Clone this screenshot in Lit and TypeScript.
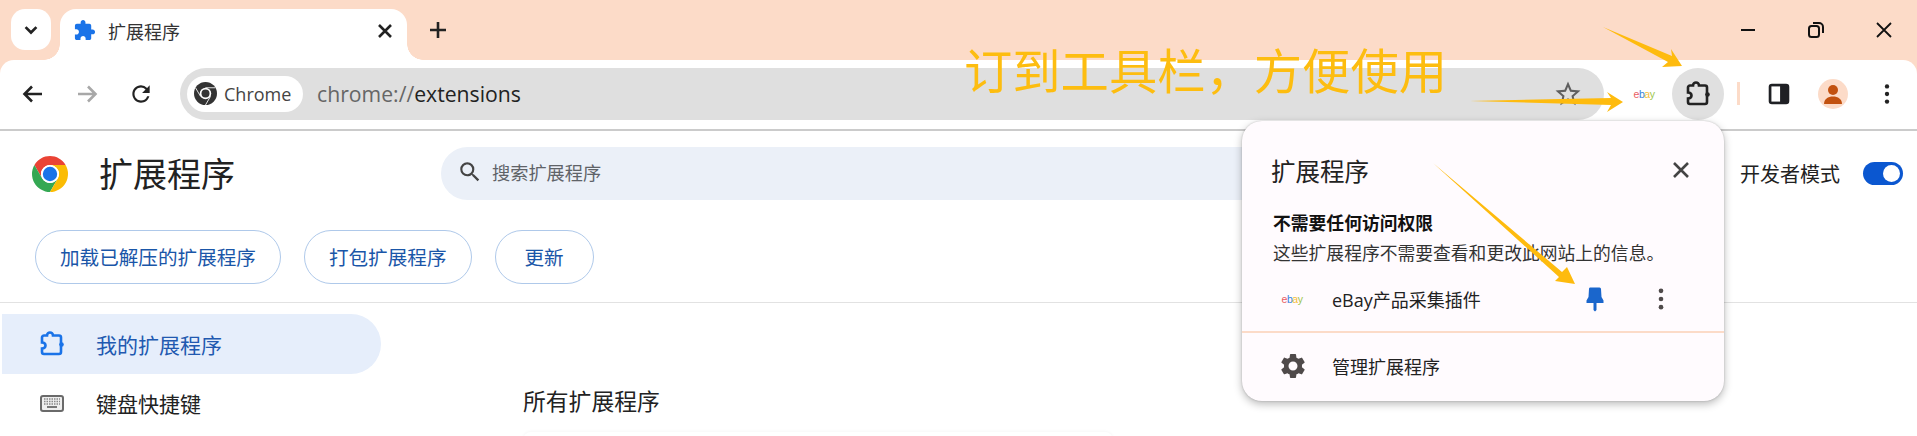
import { LitElement, html, css, svg } from "lit";
import { customElement } from "lit/decorators.js";

const puzzle = svg`<path d="M5 4.500H8C8 2.300 9.500 1.500 11 1.500S14 2.300 14 4.500H20a2 2 0 0 1 2 2V21a2 2 0 0 1-2 2H5a2 2 0 0 1-2-2V17.500C5.500 17.500 6.500 16 6.500 14.500S5.500 11.500 3 11.500V6.500a2 2 0 0 1 2-2z"/><circle cx="22.500" cy="13.500" r="2.300" stroke="none" fill="currentColor"/>`;
const dots = svg`<circle cx="12" cy="5" r="2"/><circle cx="12" cy="12" r="2"/><circle cx="12" cy="19" r="2"/>`;

const chromeLogo = (size: number) => html`<svg width=${size} height=${size} viewBox="4 4 40 40">
  <path fill="#ea4335" d="M41.32 14A20 20 0 0 0 6.68 14L15.34 29A10 10 0 0 1 24 14z"/>
  <path fill="#34a853" d="M6.68 14A20 20 0 0 0 24 44L32.66 29A10 10 0 0 1 15.34 29z"/>
  <path fill="#fbbc04" d="M24 44A20 20 0 0 0 41.32 14H24A10 10 0 0 1 32.66 29z"/>
  <circle cx="24" cy="24" r="10" fill="#fff"/><circle cx="24" cy="24" r="8" fill="#1a73e8"/></svg>`;

const ebay = html`<span class="ebay"><i class="e1">e</i><i class="e2">b</i><i class="e3">a</i><i class="e4">y</i></span>`;

@customElement("app-root")
export class AppRoot extends LitElement {
  static styles = css`
    :host { display: block; position: relative; width: 1917px; height: 436px; overflow: hidden; background: #fff;
      font-family: "Noto Sans CJK SC", "Noto Sans", sans-serif; color: #1f1f1f; }
    svg { display: block; flex: none; }
    .strip { height: 60px; background: #fcdbc8; display: flex; padding: 9px 0 0 11px; box-sizing: border-box; }
    .drop { width: 40px; height: 41px; background: #fff; border-radius: 14px; display: flex; align-items: center; justify-content: center; }
    .tab { position: relative; margin-left: 9px; width: 347px; height: 51px; background: #fff; border-radius: 16px 16px 0 0; display: flex; align-items: center; padding: 0 13px 8px 13px; box-sizing: border-box; font-size: 18px; color: #333; }
    .tab::before, .tab::after { content: ""; position: absolute; bottom: 0; width: 16px; height: 16px; }
    .tab::before { left: -16px; background: radial-gradient(circle at 0 0, transparent 15.5px, #fff 16px); }
    .tab::after { right: -16px; background: radial-gradient(circle at 100% 0, transparent 15.5px, #fff 16px); }
    .tab span { margin-left: 12px; flex: 1; }
    .plus { margin: 9px 0 0 19px; height: 24px; }
    .win { margin-left: auto; display: flex; gap: 2px; }
    .win div { width: 66px; height: 42px; display: flex; align-items: center; justify-content: center; }
    .bar { position: relative; height: 71px; box-sizing: border-box; padding: 8px 0 10px 7px; display: flex; align-items: center; gap: 2px; border-bottom: 2px solid #cbcbcb; background: #fff; border-radius: 14px 14px 0 0; }
    .stripwrap { background: #fcdbc8; }
    .ib { width: 52px; height: 52px; display: flex; align-items: center; justify-content: center; flex: none; border-radius: 50%; }
    .ib.on { background: #e0e0e0; color: #222; }
    .omni { margin: 0 12px 0 11px; width: 1424px; height: 52px; box-sizing: border-box; background: #dfdfdf; border-radius: 26px; display: flex; align-items: center; padding: 0 21px 0 7px; flex: none; }
    .chip { height: 36px; width: 116px; box-sizing: border-box; background: #fff; border-radius: 18px; display: flex; align-items: center; padding-left: 7px; gap: 7px; font: 18px "Open Sans", sans-serif; color: #444; white-space: nowrap; }
    .url { margin-left: 14px; font: 21.2px "Open Sans", sans-serif; color: #666; flex: 1; }
    .url b { font-weight: 400; color: #222; }
    .ebay { font: 10.5px "Liberation Sans", sans-serif; letter-spacing: -.5px; width: 22px; text-align: center; flex: none; opacity: .8; }
    .ebay i { font-style: normal; }
    .e1 { color: #e53238; } .e2 { color: #0064d2; } .e3 { color: #f5af02; } .e4 { color: #86b817; }
    .sep { width: 3px; height: 23px; background: #fcdbc8; margin: 0 11px; flex: none; }
    .avatar { width: 30px; height: 30px; border-radius: 50%; background: #fcdbc8; overflow: hidden; }
    .head { padding: 16px 0 0 35px; height: 172px; box-sizing: border-box; border-bottom: 1px solid #e2e2e2; }
    .row1 { display: flex; align-items: center; height: 53px; margin-left: -3px; }
    .row1 h1 { margin: 0 0 0 31px; padding-bottom: 2px; font-size: 34px; font-weight: 400; color: #222; width: 342px; white-space: nowrap; }
    .search { width: 900px; height: 53px; background: #ebf0f8; border-radius: 27px; display: flex; align-items: center; padding: 0 0 3px 16px; box-sizing: border-box; gap: 9px; font-size: 18.2px; color: #5f6368; }
    .mode { margin-left: auto; display: flex; align-items: center; margin-right: 14px; font-size: 20px; color: #222; gap: 23px; }
    .toggle { width: 40px; height: 23px; border-radius: 12px; background: #0b57d0; position: relative; }
    .toggle::after { content: ""; position: absolute; right: 3px; top: 3px; width: 17px; height: 17px; border-radius: 50%; background: #fff; }
    .btns { display: flex; gap: 23px; margin-top: 30px; }
    .btn { height: 54px; min-width: 99px; justify-content: center; box-sizing: border-box; border: 1px solid #afc9ea; border-radius: 27px; display: flex; align-items: center; padding: 0 24px 2px; font-size: 19.6px; color: #1a56a8; }
    .body { display: flex; }
    .side { width: 381px; padding: 11px 0 0 2px; box-sizing: border-box; }
    .item { height: 60px; width: 379px; display: flex; align-items: center; padding-left: 37px; box-sizing: border-box; gap: 31px; font-size: 21px; border-radius: 0 30px 30px 0; color: #222; }
    .item.on { background: #e6eefb; color: #2159b0; }
    .item + .item { padding-bottom: 2px; }
    .main { margin-left: 142px; padding-top: 81px; }
    .main h2 { margin: 0; font-size: 22.8px; font-weight: 400; color: #222; line-height: 34px; }
    .card { margin-top: 14px; width: 590px; height: 20px; background: #fff; box-shadow: 0 -1px 3px rgba(0,0,0,.035); border-radius: 8px; }

    .pop { position: absolute; left: 1242px; top: 121px; width: 482px; height: 280px; box-sizing: border-box; background: #fffbfe; border-radius: 20px; box-shadow: 0 3px 8px rgba(0,0,0,.28), 0 0 2px rgba(0,0,0,.2); display: flex; flex-direction: column; color: #222; }
    .ptop { display: flex; align-items: center; justify-content: space-between; height: 50px; padding: 24px 33px 1px 29px; font-size: 24.5px; flex: none; box-sizing: content-box; }
    .perm { padding: 0 0 0 31px; margin-top: 12px; }
    .perm b { display: block; font-size: 17.8px; line-height: 29px; font-weight: 700; color: #111; }
    .perm p { margin: 0; font-size: 17.8px; line-height: 30px; color: #333; white-space: nowrap; }
    .ext { display: flex; align-items: center; height: 64px; padding: 0 0 0 39px; font-size: 18px; flex: none; }
    .ext .nm { margin-left: 29px; width: 254px; font-family: "Open Sans", "Noto Sans CJK SC", sans-serif; font-size: 18px; white-space: nowrap; }
    .ext .pin { margin-right: 43px; }
    .mng { border-top: 2px solid #fcdbc8; display: flex; align-items: center; height: 66px; padding-left: 36px; gap: 24px; font-size: 18px; }
    .note { position: absolute; left: 964px; top: 33px; font-size: 48.3px; font-weight: 400; line-height: 70px; color: #fdbd10; white-space: nowrap; }
    .arrows { position: absolute; left: 0; top: 0; pointer-events: none; }
    .blue { color: #1a73e8; }
  `;

  render() {
    return html`
      <div class="strip">
        <div class="drop"><svg width="20" height="20" viewBox="0 0 24 24" fill="none" stroke="#222" stroke-width="3.2"><path d="M5.5 8.5 12 15l6.5-6.5"/></svg></div>
        <div class="tab">
          <svg width="23" height="23" viewBox="0 0 24 24" fill="#1a73e8"><path d="M20.5 11H19V7c0-1.1-.9-2-2-2h-4V3.500C13 2.120 11.880 1 10.500 1S8 2.120 8 3.500V5H4c-1.100 0-1.990.900-1.990 2v3.800H3.500c1.490 0 2.700 1.210 2.700 2.700s-1.210 2.700-2.700 2.700H2V20c0 1.100.900 2 2 2h3.800v-1.500c0-1.490 1.210-2.700 2.700-2.700 1.490 0 2.700 1.210 2.700 2.700V22H17c1.100 0 2-.900 2-2v-4h1.500c1.380 0 2.500-1.120 2.500-2.500S21.880 11 20.500 11z"/></svg>
          <span>扩展程序</span>
          <svg width="18" height="18" viewBox="0 0 18 18" stroke="#222" stroke-width="2.600" fill="none"><path d="M3 3l12 12M15 3 3 15"/></svg>
        </div>
        <div class="plus"><svg width="24" height="24" viewBox="0 0 24 24" stroke="#222" stroke-width="2.600" fill="none"><path d="M12 4v16M4 12h16"/></svg></div>
        <div class="win">
          <div><svg width="16" height="16" viewBox="0 0 16 16" stroke="#111" stroke-width="2"><path d="M1 8h14"/></svg></div>
          <div><svg width="18" height="18" viewBox="0 0 18 18" stroke="#111" stroke-width="2" fill="none"><rect x="2" y="5" width="10" height="11" rx="2.500"/><path d="M6 2h6a4 4 0 0 1 4 4v6"/></svg></div>
          <div><svg width="18" height="18" viewBox="0 0 18 18" stroke="#111" stroke-width="1.800" fill="none"><path d="M2 2l14 14M16 2 2 16"/></svg></div>
        </div>
      </div>
      <div class="stripwrap"><div class="bar">
        <div class="ib"><svg width="24" height="24" viewBox="0 0 24 24" stroke="#222" stroke-width="2.600" fill="none"><path d="M21 12H4M11 4.500 3.500 12l7.500 7.500"/></svg></div>
        <div class="ib"><svg width="24" height="24" viewBox="0 0 24 24" stroke="#a8a8a8" stroke-width="2.600" fill="none"><path d="M3 12h17M13 4.500l7.500 7.500-7.500 7.500"/></svg></div>
        <div class="ib"><svg width="26" height="26" viewBox="0 0 24 24" fill="#222"><path d="M17.650 6.350A7.958 7.958 0 0 0 12 4c-4.420 0-7.990 3.580-7.990 8s3.570 8 7.990 8c3.730 0 6.840-2.550 7.730-6h-2.080A5.990 5.990 0 0 1 12 18c-3.310 0-6-2.690-6-6s2.690-6 6-6c1.660 0 3.140.690 4.220 1.780L13 11h7V4l-2.350 2.350z"/></svg></div>
        <div class="omni">
          <div class="chip">
            <svg width="23" height="23" viewBox="4 4 40 40"><circle cx="24" cy="24" r="20" fill="#333"/><path d="M24 14h17M15.340 29 6.680 14M32.660 29 24 44" stroke="#fff" stroke-width="1.500"/><circle cx="24" cy="24" r="10" fill="#fff"/><circle cx="24" cy="24" r="7" fill="#333"/></svg>
            Chrome
          </div>
          <div class="url">chrome://<b>extensions</b></div>
          <svg width="30" height="30" viewBox="0 0 24 24" fill="#5f5f5f"><path d="M22 9.240l-7.190-.620L12 2 9.190 8.630 2 9.240l5.460 4.730L5.820 21 12 17.270 18.180 21l-1.630-7.030L22 9.240zM12 15.400l-3.760 2.270 1-4.280-3.320-2.880 4.380-.380L12 6.100l1.710 4.040 4.380.380-3.320 2.880 1 4.280L12 15.400z"/></svg>
        </div>
        <div class="ib">${ebay}</div>
        <div class="ib on"><svg width="26" height="26" viewBox="0 0 26 26" fill="none" stroke="currentColor" stroke-width="2.600">${puzzle}</svg></div>
        <div class="sep"></div>
        <div class="ib"><svg width="26" height="26" viewBox="0 0 24 24"><rect x="2.500" y="2.500" width="19" height="19" rx="3" fill="#1f2024"/><rect x="5" y="5" width="8" height="14" fill="#fff"/></svg></div>
        <div class="ib"><div class="avatar"><svg width="30" height="30" viewBox="0 0 30 30" fill="#c2510f"><circle cx="15" cy="11" r="5"/><path d="M6 25c0-5 4-7.500 9-7.500s9 2.500 9 7.500z"/></svg></div></div>
        <div class="ib"><svg width="26" height="26" viewBox="0 0 24 24" fill="#222">${dots}</svg></div>
      </div></div>
      <div class="head">
        <div class="row1">
          ${chromeLogo(36)}
          <h1>扩展程序</h1>
          <div class="search">
            <svg width="26" height="26" viewBox="0 0 24 24" fill="#444"><path d="M15.500 14h-.790l-.280-.270A6.471 6.471 0 0 0 16 9.500 6.500 6.500 0 1 0 9.500 16c1.610 0 3.090-.590 4.230-1.570l.270.280v.790l5 4.990L20.490 19l-4.990-5zm-6 0C7.010 14 5 11.990 5 9.500S7.010 5 9.500 5 14 7.010 14 9.500 11.990 14 9.500 14z"/></svg>
            搜索扩展程序
          </div>
          <div class="mode">开发者模式<div class="toggle"></div></div>
        </div>
        <div class="btns">
          <div class="btn">加载已解压的扩展程序</div>
          <div class="btn">打包扩展程序</div>
          <div class="btn">更新</div>
        </div>
      </div>
      <div class="body">
        <div class="side">
          <div class="item on"><svg class="blue" width="26" height="26" viewBox="0 0 26 26" fill="none" stroke="currentColor" stroke-width="2.600">${puzzle}</svg>我的扩展程序</div>
          <div class="item"><svg width="26" height="26" viewBox="0 0 26 26"><rect x="1" y="5" width="24" height="17" rx="3" fill="#6a6a6a"/><rect x="3" y="7" width="20" height="13" rx="1" fill="#eee"/><path d="M5 9h16M5 11.500h16M5 14h16" stroke="#888" stroke-width="1.300" stroke-dasharray="1.500 1"/><rect x="8" y="16" width="10" height="2" fill="#777"/></svg>键盘快捷键</div>
        </div>
        <div class="main"><h2>所有扩展程序</h2><div class="card"></div></div>
      </div>

      <div class="pop">
        <div class="ptop">扩展程序
          <svg width="20" height="20" viewBox="0 0 20 20" stroke="#444" stroke-width="2.600" fill="none"><path d="M3 3l14 14M17 3 3 17"/></svg>
        </div>
        <div class="perm"><b>不需要任何访问权限</b><p>这些扩展程序不需要查看和更改此网站上的信息。</p></div>
        <div class="ext">
          ${ebay}
          <span class="nm">eBay产品采集插件</span>
          <svg class="pin" width="18" height="25" viewBox="0 0 18 25" fill="#1a66cc"><path d="M4 .5h9.500a1.500 1.500 0 0 1 1.500 1.500L15.500 10 17.500 13.500V16H10.500V23L9 24.500 7.500 23V16H.5V13.500L2.500 10 3 2A1.500 1.500 0 0 1 4 .5z"/></svg>
          <svg width="28" height="28" viewBox="0 0 24 24" fill="#4f4a4a">${dots}</svg>
        </div>
        <div class="mng">
          <svg width="30" height="30" viewBox="0 0 24 24" fill="#4f4a4a"><path d="M19.140 12.940c.040-.300.060-.610.060-.940 0-.320-.020-.640-.070-.940l2.030-1.580a.49.49 0 0 0 .120-.610l-1.920-3.320a.488.488 0 0 0-.590-.220l-2.390.960c-.500-.380-1.030-.700-1.620-.940l-.360-2.540a.484.484 0 0 0-.480-.410h-3.840c-.240 0-.430.170-.470.410l-.360 2.540c-.590.240-1.130.570-1.620.940l-2.390-.960c-.220-.080-.470 0-.590.220L2.740 8.870c-.120.210-.080.470.120.610l2.030 1.580c-.050.300-.090.630-.090.940s.020.640.070.940l-2.030 1.580a.49.49 0 0 0-.120.610l1.920 3.320c.120.220.370.290.590.220l2.390-.960c.500.380 1.030.700 1.620.940l.360 2.540c.050.240.240.410.480.410h3.840c.240 0 .440-.170.470-.410l.360-2.540c.590-.240 1.130-.560 1.620-.940l2.390.960c.220.080.470 0 .590-.220l1.920-3.320c.120-.220.070-.470-.120-.610l-2.010-1.580zM12 15.600c-1.980 0-3.600-1.620-3.600-3.600s1.620-3.600 3.600-3.600 3.600 1.620 3.600 3.600-1.620 3.600-3.600 3.600z"/></svg>
          管理扩展程序
        </div>
      </div>

      <div class="note">订到工具栏，方便使用</div>
      <svg class="arrows" width="1917" height="436" fill="#febb0e">
        <path d="M1603 27 1672 56 1671 49 1682 66 1662 67 1668 62z"/>
        <path d="M1470 101 1611 98 1607 92 1623 102 1607 112 1611 105z"/>
        <path d="M1433 163 1562 272 1567 267 1575 284 1555 281 1559 277z"/>
      </svg>
    `;
  }
}
